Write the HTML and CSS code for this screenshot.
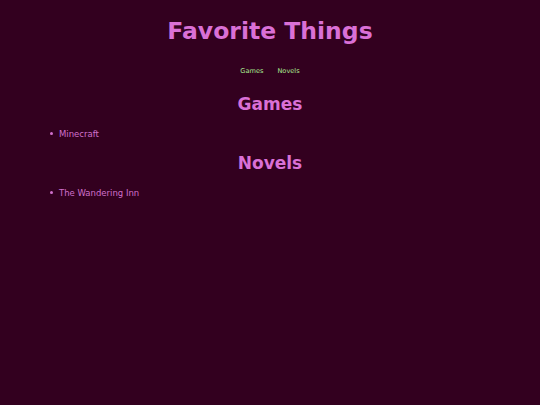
FILE: index.html
```html
<!DOCTYPE html>
<html lang="en">
<head>
<meta charset="utf-8">
<title>Favorite Things</title>
<link rel="stylesheet" href="styles.css">
</head>
<body>
<main class="page">
  <h1 class="title">Favorite Things</h1>
  <nav class="nav">
    <a class="nav-link" href="#games">Games</a>
    <a class="nav-link" href="#novels">Novels</a>
  </nav>
  <section class="section" id="games">
    <h2 class="section-title">Games</h2>
    <ul class="list">
      <li class="item">Minecraft</li>
    </ul>
  </section>
  <section class="section" id="novels">
    <h2 class="section-title">Novels</h2>
    <ul class="list">
      <li class="item">The Wandering Inn</li>
    </ul>
  </section>
</main>
</body>
</html>
```

FILE: styles.css
```css
html, body {
  margin: 0;
  padding: 0;
  background: #33001f;
  height: 100%;
}
body {
  font-family: "DejaVu Sans", Verdana, sans-serif;
  color: #da70d6;
}
.page {
  padding: 17px 24px 0;
}
.title {
  margin: 0;
  font-size: 23.5px;
  line-height: 28px;
  font-weight: bold;
  text-align: center;
  color: #da70d6;
}
.nav {
  margin-top: 21px;
  display: flex;
  justify-content: center;
  gap: 14px;
  font-size: 6.6px;
  line-height: 10px;
}
.nav-link {
  color: #a8e890;
  text-decoration: none;
}
.section-title {
  margin: 18px 0 0;
  font-size: 17px;
  line-height: 20px;
  font-weight: bold;
  text-align: center;
  color: #da70d6;
}
.section + .section .section-title {
  margin-top: 14px;
}
.list {
  margin: 15px 0 0;
  padding-left: 35px;
  list-style: none;
  font-size: 8.5px;
  line-height: 10px;
}
.item {
  color: #d070cc;
}
.item::before {
  content: "";
  display: inline-block;
  width: 3px;
  height: 3px;
  border-radius: 50%;
  background: #d070cc;
  margin-left: -9px;
  margin-right: 6px;
  vertical-align: 2px;
}
```
